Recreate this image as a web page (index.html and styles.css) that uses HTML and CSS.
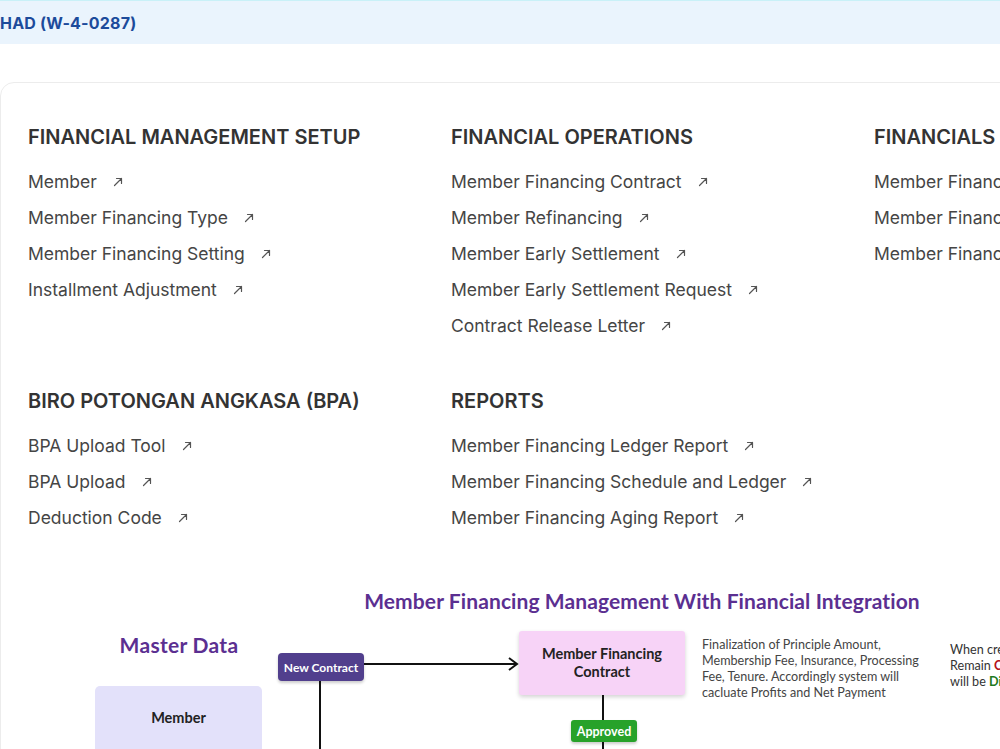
FILE: index.html
```html
<!DOCTYPE html>
<html>
<head>
<meta charset="utf-8">
<link rel="stylesheet" href="styles.css">
</head>
<body>
<header class="topbar"><span class="org">HAD (W-4-0287)</span></header>
<main class="card">
  <div class="grid">
    <section class="group">
      <h2>FINANCIAL MANAGEMENT SETUP</h2>
      <ul>
        <li><a>Member</a><svg class="ext" viewBox="0 0 10 10"><path d="M1.5 8.5 L8.5 1.5 M3.5 1.5 H8.5 V6.5"/></svg></li>
        <li><a>Member Financing Type</a><svg class="ext" viewBox="0 0 10 10"><path d="M1.5 8.5 L8.5 1.5 M3.5 1.5 H8.5 V6.5"/></svg></li>
        <li><a>Member Financing Setting</a><svg class="ext" viewBox="0 0 10 10"><path d="M1.5 8.5 L8.5 1.5 M3.5 1.5 H8.5 V6.5"/></svg></li>
        <li><a>Installment Adjustment</a><svg class="ext" viewBox="0 0 10 10"><path d="M1.5 8.5 L8.5 1.5 M3.5 1.5 H8.5 V6.5"/></svg></li>
      </ul>
    </section>
    <section class="group">
      <h2>FINANCIAL OPERATIONS</h2>
      <ul>
        <li><a>Member Financing Contract</a><svg class="ext" viewBox="0 0 10 10"><path d="M1.5 8.5 L8.5 1.5 M3.5 1.5 H8.5 V6.5"/></svg></li>
        <li><a>Member Refinancing</a><svg class="ext" viewBox="0 0 10 10"><path d="M1.5 8.5 L8.5 1.5 M3.5 1.5 H8.5 V6.5"/></svg></li>
        <li><a>Member Early Settlement</a><svg class="ext" viewBox="0 0 10 10"><path d="M1.5 8.5 L8.5 1.5 M3.5 1.5 H8.5 V6.5"/></svg></li>
        <li><a>Member Early Settlement Request</a><svg class="ext" viewBox="0 0 10 10"><path d="M1.5 8.5 L8.5 1.5 M3.5 1.5 H8.5 V6.5"/></svg></li>
        <li><a>Contract Release Letter</a><svg class="ext" viewBox="0 0 10 10"><path d="M1.5 8.5 L8.5 1.5 M3.5 1.5 H8.5 V6.5"/></svg></li>
      </ul>
    </section>
    <section class="group">
      <h2>FINANCIALS</h2>
      <ul>
        <li><a>Member Financing Accounts</a><svg class="ext" viewBox="0 0 10 10"><path d="M1.5 8.5 L8.5 1.5 M3.5 1.5 H8.5 V6.5"/></svg></li>
        <li><a>Member Financing Journal</a><svg class="ext" viewBox="0 0 10 10"><path d="M1.5 8.5 L8.5 1.5 M3.5 1.5 H8.5 V6.5"/></svg></li>
        <li><a>Member Financing Payment</a><svg class="ext" viewBox="0 0 10 10"><path d="M1.5 8.5 L8.5 1.5 M3.5 1.5 H8.5 V6.5"/></svg></li>
      </ul>
    </section>
    <section class="group">
      <h2>BIRO POTONGAN ANGKASA (BPA)</h2>
      <ul>
        <li><a>BPA Upload Tool</a><svg class="ext" viewBox="0 0 10 10"><path d="M1.5 8.5 L8.5 1.5 M3.5 1.5 H8.5 V6.5"/></svg></li>
        <li><a>BPA Upload</a><svg class="ext" viewBox="0 0 10 10"><path d="M1.5 8.5 L8.5 1.5 M3.5 1.5 H8.5 V6.5"/></svg></li>
        <li><a>Deduction Code</a><svg class="ext" viewBox="0 0 10 10"><path d="M1.5 8.5 L8.5 1.5 M3.5 1.5 H8.5 V6.5"/></svg></li>
      </ul>
    </section>
    <section class="group">
      <h2>REPORTS</h2>
      <ul>
        <li><a>Member Financing Ledger Report</a><svg class="ext" viewBox="0 0 10 10"><path d="M1.5 8.5 L8.5 1.5 M3.5 1.5 H8.5 V6.5"/></svg></li>
        <li><a>Member Financing Schedule and Ledger</a><svg class="ext" viewBox="0 0 10 10"><path d="M1.5 8.5 L8.5 1.5 M3.5 1.5 H8.5 V6.5"/></svg></li>
        <li><a>Member Financing Aging Report</a><svg class="ext" viewBox="0 0 10 10"><path d="M1.5 8.5 L8.5 1.5 M3.5 1.5 H8.5 V6.5"/></svg></li>
      </ul>
    </section>
  </div>

  <div class="diagram">
    <div class="d-title">Member Financing Management With Financial Integration</div>
    <div class="d-master">Master Data</div>
    <div class="d-new">New Contract</div>
    <div class="d-hline"></div>
    <svg class="d-head" viewBox="0 0 12 16"><path d="M2 2 L10 8 L2 14"/></svg>
    <div class="d-mfc">Member Financing<br>Contract</div>
    <div class="d-desc">Finalization of Principle Amount,<br>Membership Fee, Insurance, Processing<br>Fee, Tenure. Accordingly system will<br>cacluate Profits and Net Payment</div>
    <div class="d-when">When creating<br>Remain <b class="red">Contract</b><br>will be <b class="green">Disbursed</b></div>
    <div class="d-member">Member</div>
    <div class="d-vline1"></div>
    <div class="d-vline2"></div>
    <div class="d-approved">Approved</div>
    <div class="d-vline3"></div>
  </div>
</main>
</body>
</html>
```

FILE: styles.css
```css
html, body {
  margin: 0;
  padding: 0;
  background: #ffffff;
  overflow: hidden;
  width: 1000px;
  height: 749px;
}

body {
  font-family: Inter, "Liberation Sans", Arial, sans-serif;
  color: #333;
}

.topbar {
  height: 43px;
  background: #eaf4fd;
  border-top: 1px solid #c9f1f8;
  display: flex;
  align-items: center;
}

.org {
  font-weight: 700;
  font-size: 16px;
  color: #1c4b9b;
  letter-spacing: 0.2px;
}

.card {
  margin-top: 38px;
  width: 1100px;
  border: 1px solid #ececec;
  border-radius: 14px 0 0 0;
  padding: 42px 0 0 27px;
  box-sizing: border-box;
  height: 700px;
}

.grid {
  display: grid;
  grid-template-columns: 423px 423px 423px;
  row-gap: 46px;
}

.group h2 {
  margin: 0;
  font-size: 20px;
  line-height: 24px;
  font-weight: 600;
  color: #333;
  white-space: nowrap;
}

.group ul {
  list-style: none;
  margin: 14px 0 0 0;
  padding: 0;
}

.group li {
  height: 36px;
  display: flex;
  align-items: center;
  white-space: nowrap;
}

.group a {
  font-size: 17.5px;
  color: #454545;
}

.ext {
  width: 10px;
  height: 10px;
  margin-left: 16px;
  margin-top: 2px;
  fill: none;
  stroke: #555;
  stroke-width: 1.2;
  stroke-linecap: round;
}

.diagram {
  position: relative;
  margin-top: 25px;
  height: 220px;
  font-family: Lato, "Open Sans", sans-serif;
}

.d-title {
  position: absolute;
  left: 334px;
  top: 29px;
  width: 560px;
  text-align: center;
  font-size: 21px;
  line-height: 24px;
  font-weight: 700;
  letter-spacing: 0.1px;
  color: #5b2f91;
  white-space: nowrap;
}

.d-master {
  position: absolute;
  left: 88px;
  top: 73px;
  width: 126px;
  text-align: center;
  font-size: 21px;
  line-height: 24px;
  font-weight: 700;
  letter-spacing: 0.3px;
  color: #5b2f91;
}

.d-new {
  position: absolute;
  left: 250px;
  top: 93px;
  width: 86px;
  height: 28px;
  border-radius: 4px;
  background: #513f8d;
  color: #fff;
  font-size: 12px;
  font-weight: 700;
  display: flex;
  align-items: center;
  justify-content: center;
  box-shadow: 0 2px 3px rgba(0,0,0,0.2);
  white-space: nowrap;
}

.d-hline {
  position: absolute;
  left: 336px;
  top: 103px;
  width: 153px;
  height: 2px;
  background: #111;
}

.d-head {
  position: absolute;
  left: 479px;
  top: 96px;
  width: 12px;
  height: 16px;
  fill: none;
  stroke: #111;
  stroke-width: 2;
}

.d-mfc {
  position: absolute;
  left: 491px;
  top: 71px;
  width: 166px;
  height: 64px;
  background: #f7d3f7;
  border-radius: 3px;
  box-shadow: 0 2px 4px rgba(0,0,0,0.18);
  display: flex;
  align-items: center;
  justify-content: center;
  text-align: center;
  font-size: 14.5px;
  line-height: 18px;
  font-weight: 700;
  color: #222;
}

.d-desc {
  position: absolute;
  left: 674px;
  top: 77px;
  width: 240px;
  font-size: 12.6px;
  line-height: 16px;
  color: #444;
  white-space: nowrap;
}

.d-when {
  position: absolute;
  left: 922px;
  top: 82px;
  width: 150px;
  font-size: 12.6px;
  line-height: 16px;
  color: #333;
  white-space: nowrap;
}

.red { color: #b3121a; }
.green { color: #1f7a1f; }

.d-member {
  position: absolute;
  left: 67px;
  top: 126px;
  width: 167px;
  height: 90px;
  padding-top: 23px;
  box-sizing: border-box;
  background: #e3e1fa;
  border-radius: 5px;
  text-align: center;
  font-size: 14.5px;
  line-height: 18px;
  font-weight: 700;
  color: #222;
}

.d-vline1 {
  position: absolute;
  left: 291px;
  top: 121px;
  width: 2px;
  height: 100px;
  background: #111;
}

.d-vline2 {
  position: absolute;
  left: 574px;
  top: 135px;
  width: 2px;
  height: 25px;
  background: #111;
}

.d-approved {
  position: absolute;
  left: 543px;
  top: 160px;
  width: 66px;
  height: 22px;
  border-radius: 3px;
  background: #27a22a;
  color: #fff;
  font-size: 12.5px;
  font-weight: 700;
  display: flex;
  align-items: center;
  justify-content: center;
  box-shadow: 0 2px 3px rgba(0,0,0,0.2);
}

.d-vline3 {
  position: absolute;
  left: 574px;
  top: 182px;
  width: 2px;
  height: 40px;
  background: #111;
}
```
